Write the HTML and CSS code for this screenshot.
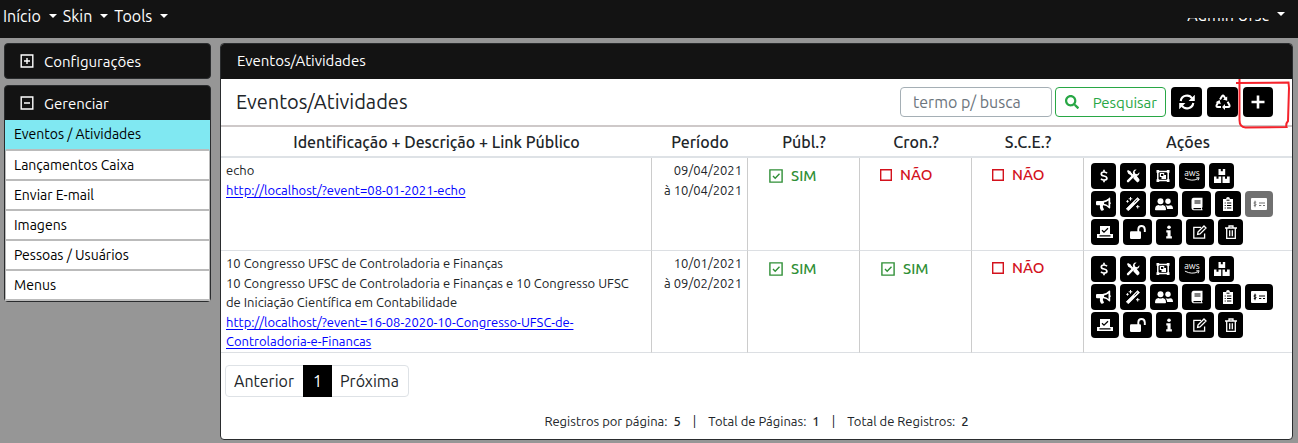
FILE: index.html
```html
<!DOCTYPE html>
<html lang="pt-BR">
<head>
<meta charset="utf-8">
<title>Eventos/Atividades</title>
<link rel="stylesheet" href="styles.css">
</head>
<body>
<svg class="sprite" aria-hidden="true">
  <symbol id="i-plus-sq" viewBox="0 0 14 14"><path d="M1.200 1h11.600v12H1.200zM7 4v6M4 7h6" fill="none" stroke="currentColor" stroke-width="1.4"/></symbol>
  <symbol id="i-minus-sq" viewBox="0 0 14 14"><path d="M1.200 1h11.600v12H1.200zM4 7h6" fill="none" stroke="currentColor" stroke-width="1.4"/></symbol>
  <symbol id="i-checked" viewBox="0 0 14 14"><path d="M.9.9h12.200v12.200H.9zM4 7l2.200 2.200 4.300-4.400" fill="none" stroke="currentColor" stroke-width="1.400"/></symbol>
  <symbol id="i-box" viewBox="0 0 12 12"><path d="M.7.700h10.600v10.600H.7z" fill="none" stroke="currentColor" stroke-width="1.400"/></symbol>
  <symbol id="i-search" viewBox="0 0 512 512"><path fill="currentColor" d="M505 442.700L405.300 343c-4.500-4.500-10.600-7-17-7H372c27.600-35.300 44-79.700 44-128C416 93.100 322.900 0 208 0S0 93.100 0 208s93.100 208 208 208c48.300 0 92.700-16.400 128-44v16.300c0 6.400 2.500 12.500 7 17l99.700 99.700c9.400 9.400 24.600 9.400 33.900 0l28.300-28.300c9.400-9.400 9.400-24.600.1-34zM208 336c-70.700 0-128-57.200-128-128 0-70.700 57.200-128 128-128 70.700 0 128 57.200 128 128 0 70.700-57.200 128-128 128z"/></symbol>
  <symbol id="i-sync" viewBox="0 0 16 16"><path d="M1.700 7a6.300 6.300 0 0 1 11.500-2.500M14.300 9a6.300 6.300 0 0 1-11.500 2.500" fill="none" stroke="currentColor" stroke-width="2.100"/><path d="M15.800.8v6.200H9.600zM.2 15.200V9h6.200z" fill="currentColor"/></symbol>
  <symbol id="i-recycle" viewBox="0 0 16 16"><path d="M5 5.500L7 2.200q1-1.500 2 0l1.300 2.200M12.600 7.800l1.800 3.200q.7 1.800-1.200 2H9.500M6 13H2.800Q.9 12.800 1.700 11l1.700-3" fill="none" stroke="currentColor" stroke-width="2"/><path d="M12.200 2.500v4.300L8 5.500zM10 10v6l-3-3zM.6 8.200L4.600 6l1.200 4.200z" fill="currentColor"/></symbol>
  <symbol id="i-plus" viewBox="0 0 14 14"><path d="M7 .5v13M.5 7h13" stroke="currentColor" stroke-width="2.600"/></symbol>
  <symbol id="i-dollar" viewBox="0 0 14 14"><path d="M10 4.300Q9 3 7 3 4.300 3 4.300 4.900 4.300 6.500 7 7t2.900 2.200Q9.900 11 7 11 5 11 4 9.800M7 .8V3M7 11v2.200" fill="none" stroke="currentColor" stroke-width="1.700"/></symbol>
  <symbol id="i-tools" viewBox="0 0 14 14"><path d="M3 3l3.500 3.500M8 8l4 4" stroke="currentColor" stroke-width="2.400"/><path d="M1 2l1-1 2.600 1.600.3 2L3.800 5.400l-1.500-.7zM8 7.500L10 6l3.400 4.300q.5 2.300-2 3.100L7.500 9.500z" fill="currentColor"/><path d="M2 12.200L8.500 5.600" stroke="currentColor" stroke-width="2.400" stroke-linecap="round"/><path d="M13.400 3.300l-2.100 2-2.200-.6-.5-2.100 2-2Q8.300.3 7.300 2t0 3.300l1.500 1.500q2.200.6 3.500-.5t1.100-3z" fill="currentColor"/></symbol>
  <symbol id="i-group" viewBox="0 0 14 14"><path d="M1.800 2.500h10.400v9H1.800z" fill="none" stroke="currentColor" stroke-width="1.500"/><path d="M.5 1h2.700v2.700H.5zM10.800 1h2.700v2.700h-2.700zM.5 10.300h2.700V13H.5zM10.800 10.300h2.700V13h-2.700zM3.800 4h4.400v2H10v4H5.500V8H3.800z" fill="currentColor"/><path d="M5 5h2.300v2H5z" fill="#000"/></symbol>
  <symbol id="i-aws" viewBox="0 0 18 6"><path d="M1 1q7.500 4 14 .6M13 .7l3-.1-1 2.700" fill="none" stroke="currentColor" stroke-width="1"/></symbol>
  <symbol id="i-boxes" viewBox="0 0 16 14"><path d="M4.500 0h2.300v2.300h2V0h2.400v6H4.500zM0 7.500h2.500v2.300h2V7.500h2.700V14H0zM8.500 7.500h2.500v2.300h2V7.500h2.700V14H8.500z" fill="currentColor"/></symbol>
  <symbol id="i-horn" viewBox="0 0 16 14"><path d="M0 5q0-1 1-1h5.500Q10.500 3.800 13 .8q1.200-.7 1.200.5v3.600q1.500 1.100 0 2.300v3.600q0 1.200-1.200.4Q10.500 8.500 7 8.300q-.8 2 1 4.200-.5 1.500-3 1Q3.300 11 4 8.300H1q-1 0-1-1z" fill="currentColor"/><path d="M8 5.500q2.600-.6 4.500-2v5.400Q10.600 7.400 8 6.800z" fill="#000"/></symbol>
  <symbol id="i-wand" viewBox="0 0 14 14"><path d="M.3 11.800L11.500.7 13.500 2.600 2.400 13.700z" fill="currentColor" stroke="currentColor" stroke-width=".8"/><path d="M8.500 5.500L11.200 2.600" stroke="#000" stroke-width=".8"/><path d="M4.500 0v3.600M2.700 1.800h3.600M1.500 3.200v2.400M.3 4.400h2.400M11.700 8v3.500M10 9.700h3.500" stroke="currentColor" stroke-width="1"/></symbol>
  <symbol id="i-users" viewBox="0 0 18 14"><g fill="currentColor"><circle cx="5.500" cy="4.200" r="3"/><circle cx="13" cy="4.200" r="2.700"/><path d="M0 12.500q0-4.200 3.500-4.500 2 1 4 0 3.500.3 3.500 4.500 0 .7-.8.7H.8q-.8 0-.8-.7zM10.500 8.300q2.500.8 5 0 2.500.3 2.500 3.700h-5.800q-.1-2.300-1.700-3.700z"/></g></symbol>
  <symbol id="i-book" viewBox="0 0 14 14"><path d="M3.500.7h9v9.500l-.6.7v1.400h.6v1h-9q-2-.2-2-2.300V3q0-2 2-2.300z" fill="currentColor"/><path d="M4.500 4h6M4.500 6h6M3.500 11.600H11" stroke="#000" stroke-width="1.200"/></symbol>
  <symbol id="i-clip" viewBox="0 0 14 14"><path d="M2 2h3q.2-2 2-2t2 2h3v12H2z" fill="currentColor"/><path d="M6 6h4.300M6 8.500h4.300M6 11h4.300M3.700 6h1M3.700 8.500h1M3.700 11h1M5.500 3.200h3" stroke="#000" stroke-width="1"/></symbol>
  <symbol id="i-check" viewBox="0 0 16 12"><rect width="16" height="12" rx="1" fill="currentColor"/><path d="M8 5h6M8 7.500h2.300M12 7.500h2" stroke="var(--hole)" stroke-width="1"/><path d="M5.200 4.200Q3 3.500 3 5t2.200 1.300Q5 8.200 2.800 7.500M4 2.700v6.500" fill="none" stroke="var(--hole)" stroke-width=".9"/></symbol>
  <symbol id="i-vote" viewBox="0 0 16 14"><path d="M3 1h10v8h3v4H0V9h3z" fill="currentColor"/><path d="M5 5.200l2 2 4-4M2.500 10.800h11" stroke="#000" stroke-width="1.300" fill="none"/></symbol>
  <symbol id="i-unlock" viewBox="0 0 16 14"><rect x="0" y="6.300" width="11" height="7.700" rx="1.200" fill="currentColor"/><path d="M8.300 7V4.300Q8.500 1 11.500 1t3.300 3.300V7" fill="none" stroke="currentColor" stroke-width="1.900"/></symbol>
  <symbol id="i-info" viewBox="0 0 14 14"><path d="M4.300 5.300h4.300v6h1.300v2.200H4.200v-2.200h1.300V7.500H4.300z" fill="currentColor"/><circle cx="7" cy="2.200" r="1.800" fill="currentColor"/></symbol>
  <symbol id="i-edit" viewBox="0 0 14 14"><path d="M8 2.300H.8v10.800h10.800V8.500M5 7L11 1l2 2-6 6-2.400.4z" fill="none" stroke="currentColor" stroke-width="1.300"/></symbol>
  <symbol id="i-trash" viewBox="0 0 14 14"><path d="M2.700 3.500v9.800h8.600V3.500M1 3h12M5 2.500V1h4v1.500M5.700 5.300v6M8.300 5.300v6" fill="none" stroke="currentColor" stroke-width="1.300"/></symbol>
</svg>

<header class="topbar">
  <nav class="menu">
    <button class="menu-btn">Início<span class="caret"></span></button>
    <button class="menu-btn">Skin<span class="caret"></span></button>
    <button class="menu-btn">Tools<span class="caret"></span></button>
  </nav>
  <button class="menu-btn user"><span class="user-name">Admin Ufsc</span><span class="caret"></span></button>
</header>

<div class="layout">
  <aside class="sidebar">
    <section class="card">
      <button class="card-head"><svg class="ico14"><use href="#i-plus-sq"/></svg>Configurações</button>
    </section>
    <section class="card">
      <button class="card-head"><svg class="ico14"><use href="#i-minus-sq"/></svg>Gerenciar</button>
      <nav class="links">
        <a href="#" class="active">Eventos / Atividades</a>
        <a href="#">Lançamentos Caixa</a>
        <a href="#">Enviar E-mail</a>
        <a href="#">Imagens</a>
        <a href="#">Pessoas / Usuários</a>
        <a href="#">Menus</a>
      </nav>
    </section>
  </aside>

  <main class="panel">
    <div class="panel-head">Eventos/Atividades</div>
    <div class="toolbar">
      <h1>Eventos/Atividades</h1>
      <form class="search">
        <span class="field">
          <input type="text" placeholder="termo p/ busca" aria-label="termo p/ busca">
          <button type="button" class="btn-search"><svg class="ico16"><use href="#i-search"/></svg>Pesquisar</button>
        </span>
        <button type="button" class="btn-tool" aria-label="Atualizar"><svg class="icotool"><use href="#i-sync"/></svg></button>
        <button type="button" class="btn-tool" aria-label="Reciclar"><svg class="icotool"><use href="#i-recycle"/></svg></button>
        <span class="add"><button type="button" class="btn-tool" aria-label="Adicionar"><svg class="ico14"><use href="#i-plus"/></svg></button><svg class="mark" viewBox="0 0 56 52"><path d="M3.500 0v41q0 7 6 7.500l41-.5q-1-3 1.500-6l1-33-.5-5.500L0 4" fill="none" stroke="#f5222b" stroke-width="2"/></svg></span>
      </form>
    </div>
    <table class="grid">
      <colgroup><col><col class="c-date"><col class="c-flag"><col class="c-flag"><col class="c-flag"><col class="c-acts"></colgroup>
      <thead><tr><th>Identificação + Descrição + Link Público</th><th>Período</th><th>Públ.?</th><th>Cron.?</th><th>S.C.E.?</th><th>Ações</th></tr></thead>
      <tbody>
        <tr>
          <td>echo<br><a href="#">http://localhost/?event=08-01-2021-echo</a></td>
          <td class="date">09/04/2021<br>à 10/04/2021</td>
          <td><span class="flag yes"><svg class="ico14"><use href="#i-checked"/></svg>SIM</span></td>
          <td><span class="flag no"><svg class="ico12"><use href="#i-box"/></svg>NÃO</span></td>
          <td><span class="flag no"><svg class="ico12"><use href="#i-box"/></svg>NÃO</span></td>
          <td class="acts">
            <div class="act-row"><button class="w25" aria-label="Valores"><svg class="ico14"><use href="#i-dollar"/></svg></button><button class="w26" aria-label="Ferramentas"><svg class="ico14"><use href="#i-tools"/></svg></button><button class="w25" aria-label="Grupo"><svg class="ico14"><use href="#i-group"/></svg></button><button class="w26 aws">aws<svg class="smile"><use href="#i-aws"/></svg></button><button class="w25" aria-label="Caixas"><svg class="ico16"><use href="#i-boxes"/></svg></button></div>
            <div class="act-row"><button class="w25" aria-label="Divulgar"><svg class="ico16"><use href="#i-horn"/></svg></button><button class="w26" aria-label="Assistente"><svg class="ico14"><use href="#i-wand"/></svg></button><button class="w28" aria-label="Pessoas"><svg class="ico18"><use href="#i-users"/></svg></button><button class="w29" aria-label="Livro"><svg class="ico14"><use href="#i-book"/></svg></button><button class="w26" aria-label="Lista"><svg class="ico14"><use href="#i-clip"/></svg></button><button class="w28" disabled aria-label="Cheque"><svg class="ico16"><use href="#i-check"/></svg></button></div>
            <div class="act-row"><button class="w28" aria-label="Votação"><svg class="ico16"><use href="#i-vote"/></svg></button><button class="w29" aria-label="Desbloquear"><svg class="ico16"><use href="#i-unlock"/></svg></button><button class="w26" aria-label="Informações"><svg class="ico14"><use href="#i-info"/></svg></button><button class="w28" aria-label="Editar"><svg class="ico14"><use href="#i-edit"/></svg></button><button class="w25" aria-label="Excluir"><svg class="ico14"><use href="#i-trash"/></svg></button></div>
          </td>
        </tr>
        <tr>
          <td>10 Congresso UFSC de Controladoria e Finanças<br>10 Congresso UFSC de Controladoria e Finanças e 10 Congresso UFSC de Iniciação Científica em Contabilidade<br><a href="#">http://localhost/?event=16-08-2020-10-Congresso-UFSC-de-Controladoria-e-Financas</a></td>
          <td class="date">10/01/2021<br>à 09/02/2021</td>
          <td><span class="flag yes"><svg class="ico14"><use href="#i-checked"/></svg>SIM</span></td>
          <td><span class="flag yes"><svg class="ico14"><use href="#i-checked"/></svg>SIM</span></td>
          <td><span class="flag no"><svg class="ico12"><use href="#i-box"/></svg>NÃO</span></td>
          <td class="acts">
            <div class="act-row"><button class="w25" aria-label="Valores"><svg class="ico14"><use href="#i-dollar"/></svg></button><button class="w26" aria-label="Ferramentas"><svg class="ico14"><use href="#i-tools"/></svg></button><button class="w25" aria-label="Grupo"><svg class="ico14"><use href="#i-group"/></svg></button><button class="w26 aws">aws<svg class="smile"><use href="#i-aws"/></svg></button><button class="w25" aria-label="Caixas"><svg class="ico16"><use href="#i-boxes"/></svg></button></div>
            <div class="act-row"><button class="w25" aria-label="Divulgar"><svg class="ico16"><use href="#i-horn"/></svg></button><button class="w26" aria-label="Assistente"><svg class="ico14"><use href="#i-wand"/></svg></button><button class="w28" aria-label="Pessoas"><svg class="ico18"><use href="#i-users"/></svg></button><button class="w29" aria-label="Livro"><svg class="ico14"><use href="#i-book"/></svg></button><button class="w26" aria-label="Lista"><svg class="ico14"><use href="#i-clip"/></svg></button><button class="w28" aria-label="Cheque"><svg class="ico16"><use href="#i-check"/></svg></button></div>
            <div class="act-row"><button class="w28" aria-label="Votação"><svg class="ico16"><use href="#i-vote"/></svg></button><button class="w29" aria-label="Desbloquear"><svg class="ico16"><use href="#i-unlock"/></svg></button><button class="w26" aria-label="Informações"><svg class="ico14"><use href="#i-info"/></svg></button><button class="w28" aria-label="Editar"><svg class="ico14"><use href="#i-edit"/></svg></button><button class="w25" aria-label="Excluir"><svg class="ico14"><use href="#i-trash"/></svg></button></div>
          </td>
        </tr>
      </tbody>
    </table>
    <nav class="pager"><a href="#">Anterior</a><a href="#" class="current">1</a><a href="#">Próxima</a></nav>
    <footer class="totals"><span>Registros por página: <b>5</b></span><span>|</span><span>Total de Páginas: <b>1</b></span><span>|</span><span>Total de Registros: <b>2</b></span></footer>
  </main>
</div>
</body>
</html>
```
FILE: styles.css
```css
* { box-sizing: border-box; }
body {
  margin: 0;
  background: #969696;
  color: #212529;
  font-family: Ubuntu, "Noto Sans", "Open Sans", sans-serif;
  font-size: 13px;
  line-height: 1.5;
}
button, input { font-family: inherit; margin: 0; }
button { cursor: pointer; }
svg { display: block; flex: none; }
.sprite { position: absolute; width: 0; height: 0; }
.ico12 { width: 12px; height: 12px; }
.ico14 { width: 14px; height: 14px; }
.ico16 { width: 16px; height: 14px; }
.ico18 { width: 18px; height: 14px; }
.icotool { width: 16px; height: 16px; }

.topbar {
  display: flex;
  justify-content: space-between;
  height: 38px;
  padding: 0 13px 0 3px;
  background: #131313;
}
.menu { display: flex; gap: 6px; }
.menu-btn {
  display: flex;
  align-items: center;
  gap: 8px;
  height: 32px;
  padding: 0;
  border: 0;
  background: none;
  color: #fff;
  font-size: 16px;
  line-height: 24px;
}
.caret {
  border: 4px solid transparent;
  border-top-color: #fff;
  border-bottom: 0;
}
.user { height: 28px; }
.user-name {
  display: flex;
  align-items: flex-end;
  height: 3px;
  margin-top: 10px;
  overflow: hidden;
  line-height: 12px;
}

.layout { display: flex; align-items: flex-start; gap: 9px; padding: 5px 5px 2px 4px; }
.sidebar { flex: none; width: 207px; display: flex; flex-direction: column; gap: 6px; }
.card { border: 1px solid #2a2c2e; border-radius: 4px; background: #131313; }
.card-head {
  display: flex;
  align-items: center;
  gap: 10px;
  width: 100%;
  height: 34px;
  padding: 0 15px;
  border: 0;
  background: none;
  color: #fff;
  font-size: 15px;
}
.links a {
  display: flex;
  align-items: center;
  height: 30px;
  padding-left: 8px;
  border: 1px solid #bbb;
  border-bottom-width: 2px;
  border-top: 0;
  background: #fff;
  color: #000;
  font-size: 14px;
  text-decoration: none;
}
.links .active { height: 31px; background: #80e8f2; border-left-color: #80e8f2; border-right-color: #80e8f2; }

.panel { flex: 1; min-width: 0; border: 1px solid #2a2c2e; border-radius: 4px; background: #fff; overflow: hidden; }
.panel-head { display: flex; align-items: center; height: 35px; padding: 0 16px; background: #131313; color: #fff; font-size: 15px; }
.toolbar {
  display: flex;
  justify-content: space-between;
  align-items: center;
  height: 48px;
  padding: 0 19px 0 15px;
  border-bottom: 2px solid #cec9c9;
}
h1 { margin: 0; font-size: 20px; font-weight: 400; line-height: 24px; }
.search { display: flex; align-items: center; gap: 5px; }
.field { display: flex; gap: 3px; }
.search input {
  width: 152px;
  height: 30px;
  padding: 0 12px;
  border: 1px solid #a5afb5;
  border-radius: 4px;
  font-size: 16px;
}
.search input::placeholder { color: #6c757d; }
.btn-search {
  display: flex;
  align-items: center;
  justify-content: space-between;
  width: 111px;
  height: 30px;
  padding: 0 8px;
  border: 1px solid #28a745;
  border-radius: 4px;
  background: #fff;
  color: #28a745;
  font-size: 15px;
}
.btn-tool {
  display: grid;
  place-items: center;
  width: 31px;
  height: 30px;
  padding: 0;
  border: 0;
  border-radius: 4px;
  background: #000;
  color: #fff;
}
.add { position: relative; }
.add .btn-tool { width: 30px; }
.mark { position: absolute; left: -7px; top: -8px; width: 56px; height: 52px; pointer-events: none; }

.grid { width: 100%; table-layout: fixed; border-collapse: separate; border-spacing: 0; }
.c-date { width: 96px; }
.c-flag { width: 112px; }
.c-acts { width: 208px; }
th { height: 31px; padding: 0; border-bottom: 2px solid #dee2e6; font-size: 16px; font-weight: 500; line-height: 24px; }
td { padding: 3px 5px 0; vertical-align: top; border-bottom: 1px solid #dcdfe3; border-right: 1px solid #ccc; }
td:last-child { border-right: 0; }
td a { color: #00f; overflow-wrap: anywhere; text-underline-offset: 2px; }
.date { text-align: right; }
.flag { display: flex; align-items: center; gap: 8px; padding: 5px 16px; font-size: 15px; font-weight: 500; line-height: 20px; }
.yes { color: #2f8f36; }
.no { padding-top: 4px; padding-left: 15px; color: #d3121d; }
.acts { padding: 5px 7px 3px; }
.act-row { display: flex; gap: 4px; margin-bottom: 2px; }
.act-row button {
  --hole: #000;
  display: flex;
  flex-direction: column;
  align-items: center;
  justify-content: center;
  height: 26px;
  padding: 0;
  border: 0;
  border-radius: 4px;
  background: #000;
  color: #fff;
}
.act-row button:disabled { --hole: #707070; background: #707070; }
.act-row .w25 { width: 25px; }
.act-row .w26 { width: 26px; }
.act-row .w28 { width: 28px; }
.act-row .w29 { width: 29px; }
.act-row .aws { font-size: 9px; line-height: 8px; }
.smile { width: 17px; height: 6px; }

.pager { display: inline-flex; margin: 12px 4px 15px; border: 1px solid #dee2e6; border-radius: 4px; }
.pager a { padding: 3px 9px 3px 8px; color: #212529; font-size: 16px; line-height: 24px; text-decoration: none; }
.pager .current { margin: -1px 0; padding: 4px 10px; background: #000; color: #fff; }
.totals { display: flex; justify-content: center; gap: 12px; padding-bottom: 8px; }
.totals b { margin-left: 3px; font-weight: 500; }
```
